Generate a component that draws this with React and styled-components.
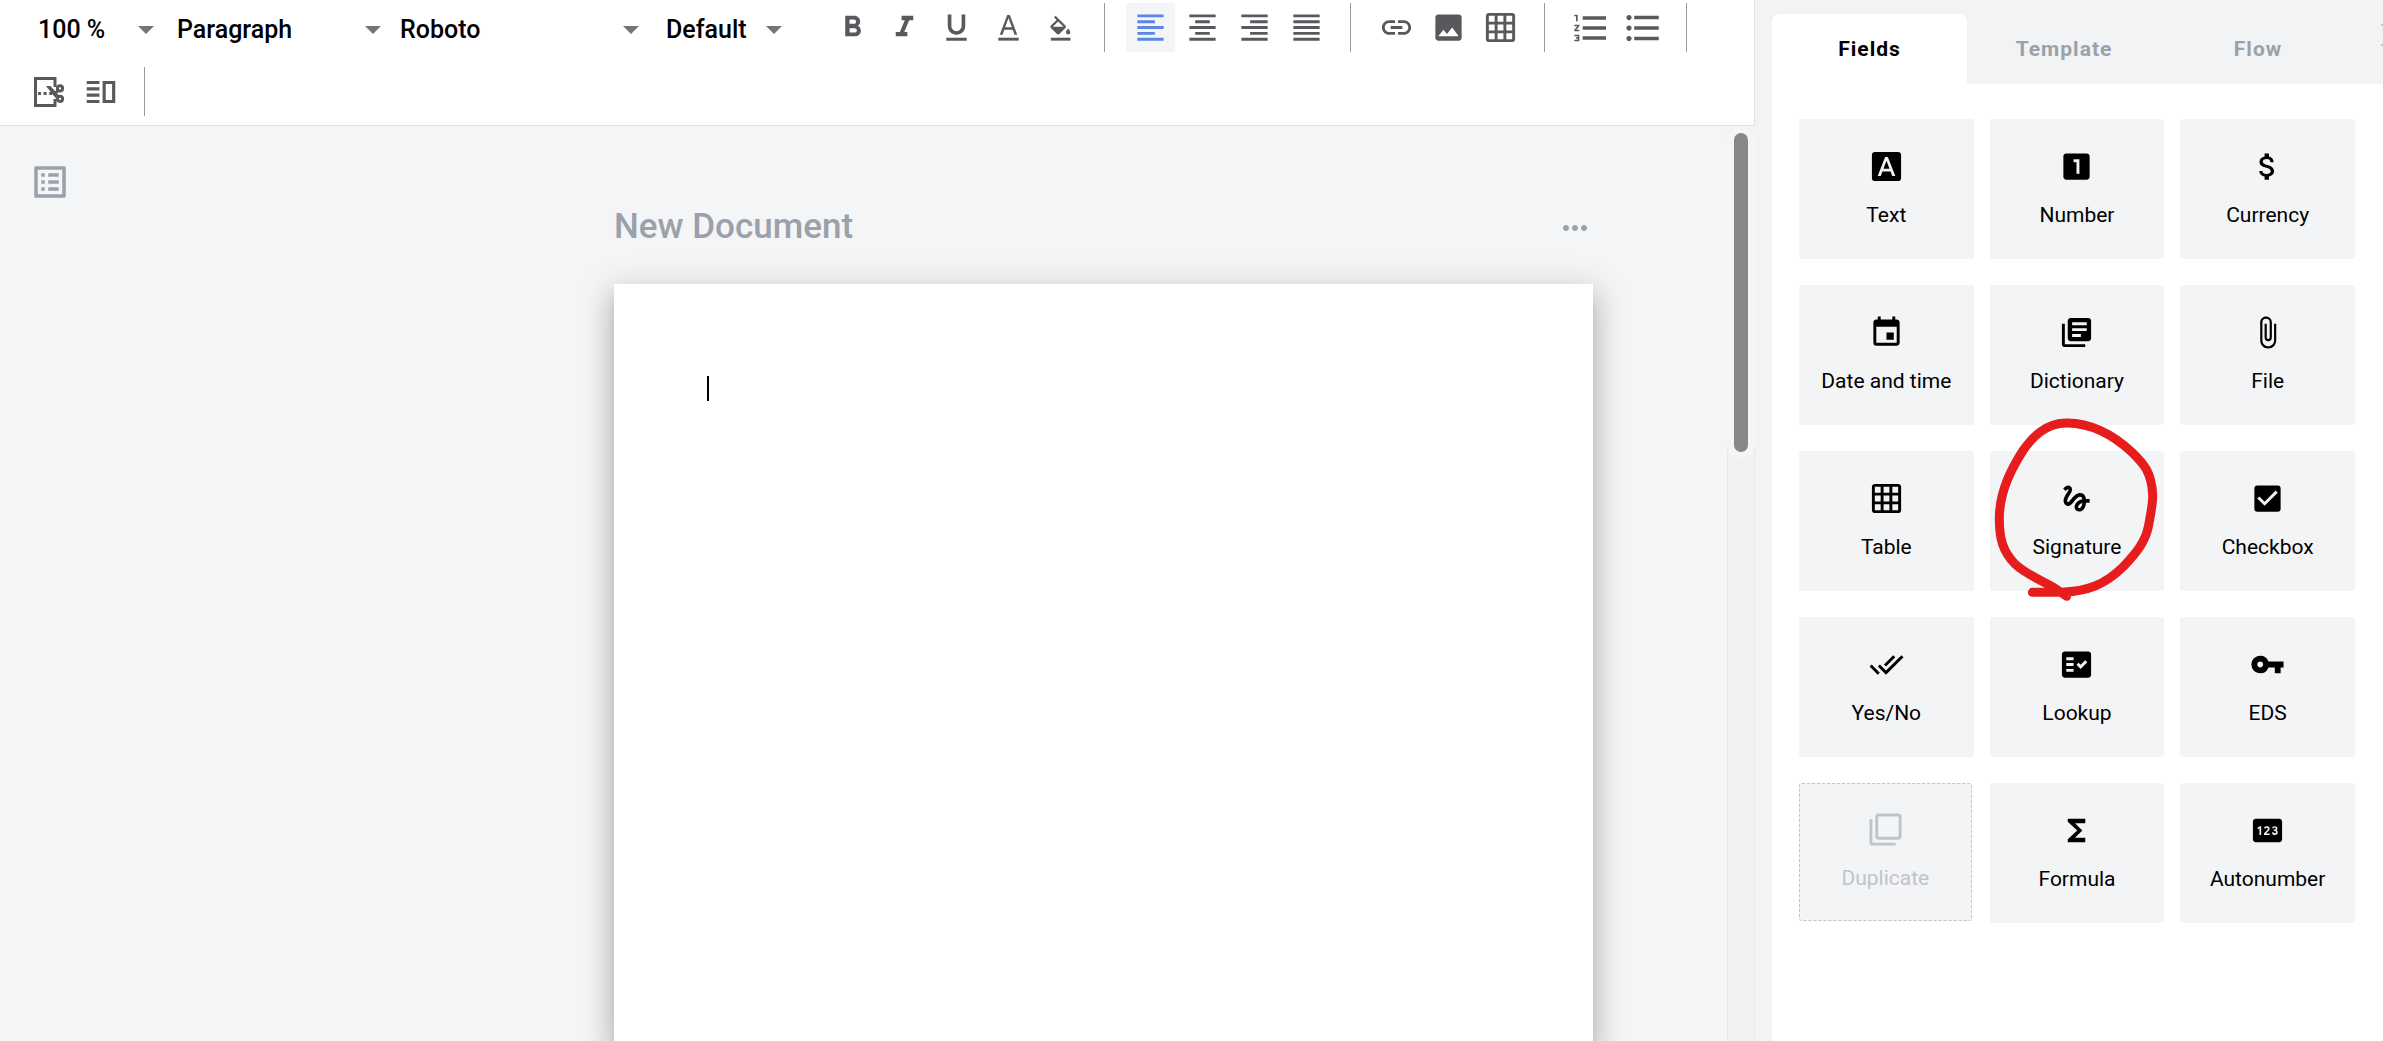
import React from "react";
import styled, { createGlobalStyle } from "styled-components";
import {
  MdAttachFile,
  MdAttachMoney,
  MdCheckBox,
  MdDoneAll,
  MdEvent,
  MdFactCheck,
  MdFilterNone,
  MdFontDownload,
  MdFormatAlignCenter,
  MdFormatAlignJustify,
  MdFormatAlignLeft,
  MdFormatAlignRight,
  MdFormatBold,
  MdFormatItalic,
  MdFormatListBulleted,
  MdFormatListNumbered,
  MdFormatUnderlined,
  MdFunctions,
  MdGesture,
  MdGridOn,
  MdImage,
  MdLibraryBooks,
  MdLink,
  MdListAlt,
  MdLooksOne,
  MdMoreHoriz,
  MdOutlineVerticalSplit,
  MdPin,
  MdVpnKey,
} from "react-icons/md";

const GlobalStyle = createGlobalStyle`
  *, *::before, *::after { box-sizing: border-box; }
  body {
    margin: 0;
    overflow: hidden;
    background: #f3f5f7;
    color: #000;
    font-family: Roboto, "Liberation Sans", sans-serif;
  }
  button, select { font: inherit; color: inherit; }
  svg { display: block; flex: none; }
`;

const Shell = styled.div`
  display: flex;
  height: 100vh;
`;

const Editor = styled.main`
  flex: 1;
  min-width: 0;
  display: flex;
  flex-direction: column;
`;

/* Toolbar */

const Toolbar = styled.div`
  display: flex;
  flex-wrap: wrap;
  row-gap: 15px;
  padding: 3px 24px 9px;
  background: #fff;
  border-right: 1px solid #dfe1e4;
  border-bottom: 1px solid #dfe1e4;
`;

const SelectGroup = styled.div`
  display: flex;
  padding: 0 46px 0 14px;
`;

const SelectBox = styled.label`
  position: relative;
  display: flex;
  align-items: center;
  height: 49px;
  padding-top: 4px;
  width: ${(p) => p.$width}px;
  margin-right: ${(p) => p.$after}px;
`;

const Select = styled.select`
  width: 100%;
  height: 42px;
  padding: 0;
  border: 0;
  background: transparent;
  appearance: none;
  font-size: 25px;
  font-weight: 500;
  outline: none;
`;

const Caret = styled.svg`
  position: absolute;
  right: 0;
  width: 16px;
  height: 8px;
  fill: #757575;
  pointer-events: none;
`;

const ToolGroup = styled.div`
  display: flex;
  gap: 3px;
  padding-right: 19px;
  margin-right: ${(p) => (p.$last ? 0 : 21)}px;
  border-right: 1px solid #969ca6;
`;

const ToolButton = styled.button`
  display: grid;
  place-items: center;
  width: 49px;
  height: 49px;
  padding: 0;
  border: 0;
  background: ${(p) => (p.$active ? "#f3f5f7" : "transparent")};
  color: ${(p) => (p.$active ? "#5b86e5" : "#58595d")};
`;

/* Workspace */

const Workspace = styled.div`
  flex: 1;
  min-height: 0;
  display: flex;
  background: #f3f5f7;
`;

const Rail = styled.div`
  flex: none;
  width: 480px;
  padding: 35px 29px;
`;

const OutlineButton = styled.button`
  display: grid;
  place-items: center;
  width: 42px;
  height: 42px;
  padding: 0;
  border: 0;
  background: transparent;
  color: #9aa1aa;
`;

const Canvas = styled.div`
  flex: 1;
  min-width: 0;
  display: flex;
  flex-direction: column;
  align-items: center;
  padding-top: 78px;
`;

const TitleRow = styled.header`
  display: flex;
  align-items: center;
  justify-content: space-between;
  width: 979px;
  max-width: 100%;
  height: 48px;
  margin-bottom: 32px;
  color: #9aa1aa;
`;

const Title = styled.h1`
  margin: 0;
  padding-bottom: 2px;
  font-size: 35px;
  line-height: 44px;
  font-weight: 500;
`;

const MoreButton = styled.button`
  padding: 0;
  border: 0;
  background: transparent;
  color: inherit;
`;

const Page = styled.div`
  flex: 1;
  width: 979px;
  max-width: 100%;
  padding: 92px 93px;
  background: #fff;
  outline: none;
  box-shadow:
    0 10px 11px -6px rgba(0, 0, 0, 0.2),
    0 17px 24px 3px rgba(0, 0, 0, 0.14),
    0 7px 31px 6px rgba(0, 0, 0, 0.12);
`;

const TextCursor = styled.div`
  width: 2px;
  height: 25px;
  background: #000;
`;

const ScrollTrack = styled.div`
  flex: none;
  width: 28px;
  background: #f1f1f1;
  border: 1px solid #e8e8e8;
  border-width: 0 1px;
  border-radius: 14px 14px 0 0;
`;

const ScrollThumb = styled.div`
  width: 28px;
  height: 333px;
  margin-left: -1px;
  border: 7px solid #f3f5f7;
  border-radius: 14px;
  background: #868789;
`;

/* Sidebar */

const Sidebar = styled.aside`
  flex: none;
  width: 628px;
  display: flex;
  flex-direction: column;
  padding: 14px 0 0 17px;
  background: #f2f3f5;
  overflow: hidden;
`;

const Tabs = styled.div`
  display: flex;
`;

const Tab = styled.button`
  flex: none;
  width: ${(p) => (p.$active ? 195 : 194)}px;
  height: 70px;
  padding: 0;
  border: 0;
  border-radius: 7px 7px 0 0;
  background: ${(p) => (p.$active ? "#fff" : "transparent")};
  color: ${(p) => (p.$active ? "#000" : "#9aa1aa")};
  font-size: 21px;
  font-weight: 700;
  letter-spacing: 1px;
`;

const IconTab = styled(Tab)`
  display: flex;
  padding: 9px 26px;
`;

const Panel = styled.div`
  flex: 1;
  padding: 35px 28px 35px 27px;
  background: #fff;
`;

const FieldGrid = styled.ul`
  display: grid;
  grid-template-columns: repeat(3, 1fr);
  gap: 26px 16px;
  margin: 0;
  padding: 0;
  list-style: none;
`;

const FieldItem = styled.li`
  position: relative;
  height: 140px;
  padding: ${(p) => (p.$dashed ? "0 2px 2px 0" : 0)};
`;

const FieldCard = styled.button`
  display: flex;
  flex-direction: column;
  align-items: center;
  justify-content: center;
  gap: 17px;
  width: 100%;
  height: 100%;
  padding: 0;
  border: ${(p) => (p.$dashed ? "1px dashed #bfc4ca" : 0)};
  border-radius: 3px;
  background: #f3f4f6;
  color: ${(p) => (p.$dashed ? "#bfc4ca" : "#000")};
  font-size: 21px;
  line-height: 29px;
`;

const Marker = styled.svg`
  position: absolute;
  z-index: 1;
  left: -10px;
  top: -51px;
  width: 200px;
  height: 210px;
  fill: none;
  stroke: #e71c1c;
  stroke-width: 27;
  stroke-linecap: round;
  stroke-linejoin: round;
  pointer-events: none;
`;

/* Icons the package draws differently */

const TextColorIcon = ({ size }) => (
  <svg width={size} height={size} viewBox="0 0 24 24" fill="currentColor" aria-hidden="true">
    <path d="M11.1 3.4 6 17h1.9l1.2-3.4h5.8l1.2 3.4H18L12.9 3.4h-1.8Zm-1.4 8.5L12 5.4l2.3 6.5H9.7Z" />
    <rect x="5" y="19" width="14" height="2" />
  </svg>
);

const FillIcon = ({ size }) => (
  <svg width={size} height={size} viewBox="0 0 24 24" fill="currentColor" aria-hidden="true">
    <g transform="translate(2.8 3.9) scale(.76)">
      <path d="M16.56 8.94 7.62 0 6.21 1.41l2.38 2.38-5.15 5.15a1.49 1.49 0 0 0 0 2.12l5.5 5.5c.29.29.68.44 1.06.44s.77-.15 1.06-.44l5.5-5.5c.59-.58.59-1.53 0-2.12ZM5.21 10 10 5.21 14.79 10H5.21ZM19 11.5s-2 2.17-2 3.5c0 1.1.9 2 2 2s2-.9 2-2c0-1.33-2-3.5-2-3.5Z" />
    </g>
    <rect x="5.4" y="19" width="13.4" height="2" />
  </svg>
);

const PageBreakIcon = () => (
  <svg width="30" height="30" viewBox="0 0 30 30" fill="none" stroke="currentColor" strokeWidth="3" aria-hidden="true">
    <path d="M21 10V1.5H1.5v27H21V22" />
    <path d="M4 16.5h14" strokeDasharray="3 2.6" />
    <path d="M12 9h4.5l8 9-3 3Z" fill="currentColor" stroke="none" />
    <path d="M24 13.5 19.5 18" />
    <circle cx="26" cy="11.4" r="2.6" />
    <circle cx="26" cy="21.8" r="2.6" />
  </svg>
);

const ICON = 35;

const selects = [
  { label: "Zoom", value: "100 %", width: 116, after: 23 },
  { label: "Text style", value: "Paragraph", width: 204, after: 19 },
  { label: "Font family", value: "Roboto", width: 239, after: 27 },
  { label: "Font size", value: "Default", width: 116, after: 0 },
];

const toolGroups = [
  [
    { label: "Bold", icon: MdFormatBold },
    { label: "Italic", icon: MdFormatItalic },
    { label: "Underline", icon: MdFormatUnderlined },
    { label: "Text color", icon: TextColorIcon },
    { label: "Fill color", icon: FillIcon },
  ],
  [
    { label: "Align left", icon: MdFormatAlignLeft, active: true },
    { label: "Align center", icon: MdFormatAlignCenter },
    { label: "Align right", icon: MdFormatAlignRight },
    { label: "Justify", icon: MdFormatAlignJustify },
  ],
  [
    { label: "Insert link", icon: MdLink },
    { label: "Insert image", icon: MdImage },
    { label: "Insert table", icon: MdGridOn },
  ],
  [
    { label: "Numbered list", icon: MdFormatListNumbered, size: 40 },
    { label: "Bulleted list", icon: MdFormatListBulleted, size: 42 },
  ],
  [
    { label: "Page break", icon: PageBreakIcon },
    { label: "Columns", icon: MdOutlineVerticalSplit, size: 38 },
  ],
];

const fields = [
  { label: "Text", icon: MdFontDownload },
  { label: "Number", icon: MdLooksOne },
  { label: "Currency", icon: MdAttachMoney },
  { label: "Date and time", icon: MdEvent },
  { label: "Dictionary", icon: MdLibraryBooks },
  { label: "File", icon: MdAttachFile },
  { label: "Table", icon: MdGridOn },
  { label: "Signature", icon: MdGesture, marked: true },
  { label: "Checkbox", icon: MdCheckBox },
  { label: "Yes/No", icon: MdDoneAll },
  { label: "Lookup", icon: MdFactCheck },
  { label: "EDS", icon: MdVpnKey },
  { label: "Duplicate", icon: MdFilterNone, dashed: true },
  { label: "Formula", icon: MdFunctions },
  { label: "Autonumber", icon: MdPin },
];

export default function App() {
  return (
    <>
      <GlobalStyle />
      <Shell>
        <Editor>
          <Toolbar role="toolbar" aria-label="Formatting">
            <SelectGroup>
              {selects.map((s) => (
                <SelectBox key={s.label} $width={s.width} $after={s.after}>
                  <Select aria-label={s.label} defaultValue={s.value}>
                    <option>{s.value}</option>
                  </Select>
                  <Caret viewBox="0 0 16 8" aria-hidden="true">
                    <path d="M0 0h16L8 8Z" />
                  </Caret>
                </SelectBox>
              ))}
            </SelectGroup>
            {toolGroups.map((group, i) => (
              <ToolGroup key={group[0].label} $last={i >= toolGroups.length - 2}>
                {group.map(({ label, icon: Icon, size = ICON, active }) => (
                  <ToolButton key={label} type="button" aria-label={label} $active={active}>
                    <Icon size={size} />
                  </ToolButton>
                ))}
              </ToolGroup>
            ))}
          </Toolbar>
          <Workspace>
            <Rail>
              <OutlineButton type="button" aria-label="Document outline">
                <MdListAlt size={42} />
              </OutlineButton>
            </Rail>
            <Canvas>
              <TitleRow>
                <Title>New Document</Title>
                <MoreButton type="button" aria-label="Document menu">
                  <MdMoreHoriz size={36} />
                </MoreButton>
              </TitleRow>
              <Page role="textbox" aria-label="Document body" tabIndex={0}>
                <TextCursor />
              </Page>
            </Canvas>
            <ScrollTrack>
              <ScrollThumb />
            </ScrollTrack>
          </Workspace>
        </Editor>
        <Sidebar>
          <Tabs role="tablist">
            <Tab type="button" role="tab" aria-selected="true" $active>
              Fields
            </Tab>
            <Tab type="button" role="tab" aria-selected="false">
              Template
            </Tab>
            <Tab type="button" role="tab" aria-selected="false">
              Flow
            </Tab>
            <IconTab type="button" role="tab" aria-selected="false" aria-label="More">
              <svg width="24" height="24" viewBox="0 0 24 24" stroke="#c4c7cb" strokeWidth="2" aria-hidden="true">
                <path d="M0 2h24M0 22h24" />
              </svg>
            </IconTab>
          </Tabs>
          <Panel role="tabpanel" aria-label="Fields">
            <FieldGrid>
              {fields.map(({ label, icon: Icon, marked, dashed }) => (
                <FieldItem key={label} $dashed={dashed}>
                  <FieldCard type="button" $dashed={dashed}>
                    <Icon size={ICON} />
                    {label}
                  </FieldCard>
                  {marked && (
                    <Marker viewBox="0 0 600 630" aria-hidden="true">
                      <path d="M157 577H245C320 574 375 555 430 500C470 458 495 425 504 385C512 345 519 310 518 285C515 215 490 190 455 156C400 105 335 70 262 69C195 68 155 115 130 150C95 205 60 270 58 350C57 420 70 455 105 492C140 525 190 543 228 567L260 589" />
                    </Marker>
                  )}
                </FieldItem>
              ))}
            </FieldGrid>
          </Panel>
        </Sidebar>
      </Shell>
    </>
  );
}
